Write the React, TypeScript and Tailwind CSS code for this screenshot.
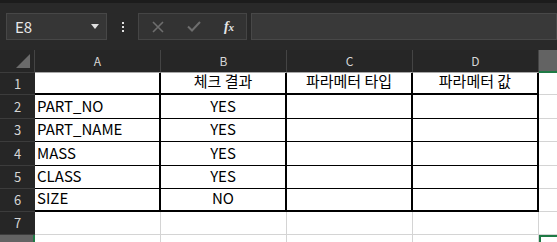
import React from 'react';

const FONT = "font-['Noto_Sans_CJK_KR','Noto_Sans',sans-serif]";

type Cell = { text?: string; align?: 'left' | 'center'; cls: string };

// row heights measured from the sheet
const rowHeights = ['h-[22px]', 'h-[24px]', 'h-[23px]', 'h-[24px]', 'h-[23px]', 'h-[23px]', 'h-[23px]', 'h-[23px]'];

const grid = 'border-r border-b border-r-[#d4d4d4] border-b-[#d4d4d4]';
// table cell borders
const topRow = 'border-r-2 border-b-2 border-r-black border-b-black';
const midRow = 'border-r-2 border-b border-r-black border-b-black';
const lastRow = 'border-r-2 border-b-2 border-r-black border-b-black';

const items = [
  ['', '체크 결과', '파라메터 타입', '파라메터 값'],
  ['PART_NO', 'YES', '', ''],
  ['PART_NAME', 'YES', '', ''],
  ['MASS', 'YES', '', ''],
  ['CLASS', 'YES', '', ''],
  ['SIZE', 'NO', '', ''],
  ['', '', '', ''],
  ['', '', '', ''],
];

function rowCells(r: number): Cell[] {
  const vals = items[r];
  const border = r === 0 ? topRow : r === 5 ? lastRow : r < 5 ? midRow : grid;
  return vals.map((v, c) => ({
    text: v,
    align: c === 0 ? 'left' : 'center',
    cls: border,
  }));
}

const ColHeader = ({ label, selected }: { label: string; selected?: boolean }) =>
  selected ? (
    <div className="flex-1 h-full bg-[#636363] border-b-2 border-b-[#1f7a45]" />
  ) : (
    <div className="w-[126px] h-full flex items-center justify-center border-r border-r-[#444444] border-b border-b-[#a8a8a8] text-[12px] text-[#d6d6d6]">
      {label}
    </div>
  );

export default function App() {
  return (
    <div className={`w-[557px] h-[242px] overflow-hidden bg-[#262626] ${FONT}`}>
      {/* top strip */}
      <div className="h-[3px] bg-[#1c1c1c]" />

      {/* formula bar */}
      <div className="h-[47px] bg-[#292929] pt-[10px] pl-[6px] flex items-start">
        <div className="w-[101px] h-[27px] bg-[#363636] border border-[#474747] flex items-center justify-between pl-[8px] pr-[7px]">
          <span className="text-[15px] text-[#e8e8e8] leading-none">E8</span>
          <svg width="8" height="5" viewBox="0 0 8 5">
            <path d="M0 0 L8 0 L4 5 Z" fill="#e0e0e0" />
          </svg>
        </div>
        <div className="w-[31px] h-[27px] flex flex-col items-center justify-center gap-[2px]">
          <span className="w-[2px] h-[2px] bg-[#e0e0e0]" />
          <span className="w-[2px] h-[2px] bg-[#e0e0e0]" />
          <span className="w-[2px] h-[2px] bg-[#e0e0e0]" />
        </div>
        <div className="w-[109px] h-[27px] bg-[#333333] border border-[#454545] flex items-center">
          <div className="w-[37px] flex justify-center">
            <svg width="12" height="12" viewBox="0 0 12 12">
              <path d="M1 1 L11 11 M11 1 L1 11" stroke="#6e6e6e" strokeWidth="1.6" />
            </svg>
          </div>
          <div className="w-[36px] flex justify-center">
            <svg width="14" height="11" viewBox="0 0 14 11">
              <path d="M1 5.5 L5 9.5 L13 1" stroke="#6e6e6e" strokeWidth="2" fill="none" />
            </svg>
          </div>
          <div className="w-[34px] flex justify-center">
            <span className="font-['Liberation_Serif',serif] italic text-[14px] text-[#e6e6e6] leading-none font-bold">
              f<span className="text-[11px]">x</span>
            </span>
          </div>
        </div>
        <div className="ml-[4px] flex-1 h-[27px] bg-[#393939] border border-[#484848]" />
      </div>

      {/* column headers */}
      <div className="h-[23px] flex bg-[#262626]">
        <div className="w-[35px] h-full border-r border-r-[#444444] border-b border-b-[#3c3c3c] flex items-end justify-end pr-[4px] pb-[4px]">
          <svg width="14" height="14" viewBox="0 0 14 14">
            <path d="M14 0 L14 14 L0 14 Z" fill="#6b6b6b" />
          </svg>
        </div>
        <ColHeader label="A" />
        <ColHeader label="B" />
        <ColHeader label="C" />
        <ColHeader label="D" />
        <ColHeader label="E" selected />
      </div>

      {/* rows */}
      {items.map((_, r) => {
        const cells = rowCells(r);
        const sel = r === 7;
        return (
          <div key={r} className={`flex ${rowHeights[r]}`}>
            <div
              className={
                sel
                  ? 'w-[35px] h-full bg-[#636363] border-r-2 border-r-[#1f7a45]'
                  : 'w-[35px] h-full bg-[#262626] border-b border-b-[#3c3c3c] flex items-center justify-center text-[13px] text-[#d6d6d6]'
              }
            >
              {sel ? null : r + 1}
            </div>
            {cells.map((c, i) => (
              <div
                key={i}
                className={`w-[126px] h-full bg-white flex items-end pb-[2px] text-[15px] leading-[20px] text-black ${c.cls} ${
                  c.align === 'left' ? 'justify-start pl-[2px]' : 'justify-center'
                }`}
              >
                {c.text}
              </div>
            ))}
            <div
              className={
                sel
                  ? 'flex-1 h-full bg-white border-t-2 border-l-2 border-t-[#1f7a45] border-l-[#1f7a45]'
                  : 'flex-1 h-full bg-white border-b border-b-[#d4d4d4]'
              }
            />
          </div>
        );
      })}
    </div>
  );
}
